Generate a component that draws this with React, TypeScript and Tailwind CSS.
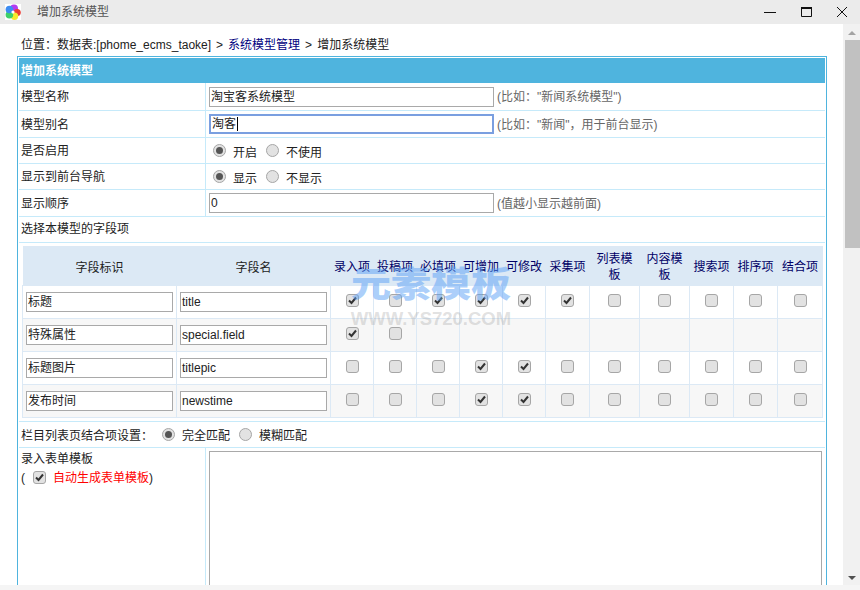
const FONT = "[font-family:'Liberation_Sans','Noto_Sans_CJK_SC',sans-serif]";

const COLUMNS = [
  { label: "录入项", width: "w-[43px]" },
  { label: "投稿项", width: "w-[43px]" },
  { label: "必填项", width: "w-[43px]" },
  { label: "可增加", width: "w-[43px]" },
  { label: "可修改", width: "w-[43px]" },
  { label: "采集项", width: "w-[44px]" },
  { label: "列表模板", width: "w-[50px]" },
  { label: "内容模板", width: "w-[50px]" },
  { label: "搜索项", width: "w-[44px]" },
  { label: "排序项", width: "w-[44px]" },
  { label: "结合项", width: "w-[45px]" },
];

// null = no checkbox in that cell
const ROWS: { title: string; name: string; checks: (boolean | null)[] }[] = [
  { title: "标题", name: "title", checks: [true, false, true, true, true, true, false, false, false, false, false] },
  { title: "特殊属性", name: "special.field", checks: [true, false, null, null, null, null, null, null, null, null, null] },
  { title: "标题图片", name: "titlepic", checks: [false, false, false, true, true, false, false, false, false, false, false] },
  { title: "发布时间", name: "newstime", checks: [false, false, false, true, true, false, false, false, false, false, false] },
];

function Check({ checked }: { checked: boolean }) {
  return (
    <span className="relative block h-[13px] w-[13px] rounded-[3px] border border-[#a6a6a6] bg-[#e2e2e2]">
      {checked && (
        <svg viewBox="0 0 11 11" className="absolute inset-0 h-[11px] w-[11px]">
          <path d="M2 5.5 L4.5 8 L9 2.5" fill="none" stroke="#333" strokeWidth="2" />
        </svg>
      )}
    </span>
  );
}

function Radio({ checked }: { checked: boolean }) {
  return (
    <span className="flex h-[13px] w-[13px] items-center justify-center rounded-full border border-[#a6a6a6] bg-[#e2e2e2]">
      {checked && <span className="h-[7px] w-[7px] rounded-full bg-[#555]" />}
    </span>
  );
}

function RadioGroup({ options, className }: { options: string[]; className?: string }) {
  return (
    <div className={`flex items-center ${className ?? ""}`}>
      {options.map((opt, i) => (
        <span key={opt} className="flex items-center">
          <Radio checked={i === 0} />
          <span className="relative top-[2px] ml-[7px] mr-[9px]">{opt}</span>
        </span>
      ))}
    </div>
  );
}

function FormRow({ label, height, children }: { label: string; height: string; children: React.ReactNode }) {
  return (
    <div className={`flex border-b border-[#c6eafa] ${height}`}>
      <div className="flex w-[187px] shrink-0 items-center border-r border-[#c6eafa] pl-[2px] pt-[1px]">{label}</div>
      <div className="flex flex-1 items-center pl-[3px]">{children}</div>
    </div>
  );
}

function TextBox({ value, focused }: { value: string; focused?: boolean }) {
  return (
    <div
      className={`flex h-[20px] w-[285px] items-center pl-[1px] ${
        focused ? "border-2 border-[#7a9fe0]" : "border border-[#a9a9a9]"
      }`}
    >
      {value}
      {focused && <span className="ml-[1px] h-[14px] w-px bg-black" />}
    </div>
  );
}

function FieldsTable() {
  return (
    <table className="w-[800px] table-fixed border-collapse">
      <thead>
        <tr className="h-[39px] bg-[#dce9f5]">
          <th className="w-[154px] pt-[6px] font-normal text-[#222]">字段标识</th>
          <th className="w-[154px] pt-[6px] font-normal text-[#222]">字段名</th>
          {COLUMNS.map((c) => (
            <th key={c.label} className={`${c.width} px-[3px] pt-[4px] font-normal leading-[16px] text-[#000066]`}>
              {c.label}
            </th>
          ))}
        </tr>
      </thead>
      <tbody>
        {ROWS.map((row, i) => (
          <tr key={row.name} className={`h-[33px] ${i % 2 === 1 ? "bg-[#f7f7f7]" : "bg-white"}`}>
            <td className="border border-[#dce9f5] pl-[3px]">
              <div className="flex h-[20px] w-[147px] items-center border border-[#a9a9a9] bg-white pl-[1px]">{row.title}</div>
            </td>
            <td className="border border-[#dce9f5] pl-[3px]">
              <div className="flex h-[20px] w-[147px] items-center border border-[#a9a9a9] bg-white pl-[1px]">{row.name}</div>
            </td>
            {row.checks.map((c, j) => (
              <td key={j} className="border border-[#dce9f5]">
                {c !== null && (
                  <span className="relative -top-[1px] flex justify-center">
                    <Check checked={c} />
                  </span>
                )}
              </td>
            ))}
          </tr>
        ))}
      </tbody>
    </table>
  );
}

export default function App() {
  return (
    <div className={`flex h-[590px] w-[860px] flex-col overflow-hidden bg-white text-[12px] text-[#222] ${FONT}`}>
      {/* ---- Window title bar ---- */}
      <div className="flex h-[24px] shrink-0 items-center bg-[#ebebeb]">
        <svg viewBox="0 0 16 16" className="ml-[5px] h-[16px] w-[16px]">
          <rect width="16" height="16" fill="#fff" />
          <circle cx="9" cy="4.5" r="4" fill="#b23cf0" />
          <circle cx="12.2" cy="8.5" r="3.6" fill="#ea3d35" />
          <circle cx="9.5" cy="12.3" r="3.7" fill="#f5ea2e" />
          <circle cx="4.4" cy="10.8" r="3.8" fill="#3fd06a" />
          <circle cx="4.4" cy="5.5" r="3.8" fill="#3d8cf2" />
          <circle cx="8" cy="8" r="1.6" fill="#fff" />
        </svg>
        <span className="ml-[16px] text-[#555]">增加系统模型</span>
        <div className="ml-auto mr-[13px] flex items-center gap-[25px]">
          <svg viewBox="0 0 12 12" className="h-[12px] w-[12px]">
            <path d="M0 6.5 H12" stroke="#111" strokeWidth="1" />
          </svg>
          <svg viewBox="0 0 11 10" className="h-[10px] w-[11px]">
            <path d="M.5 1 H10.5 V9.5 H.5 Z" fill="none" stroke="#111" strokeWidth="1" />
            <path d="M0 1 H11" stroke="#111" strokeWidth="2" />
          </svg>
          <svg viewBox="0 0 10 10" className="h-[10px] w-[10px]">
            <path d="M0 0 L10 10 M10 0 L0 10" stroke="#111" strokeWidth="1" />
          </svg>
        </div>
      </div>

      <div className="flex min-h-0 flex-1">
        <div className="min-w-0 flex-1 overflow-hidden">
          {/* ---- Breadcrumb ---- */}
          <div className="ml-[21px] mt-[13px] flex h-[19px] leading-[16px]">
            <span>位置：数据表:[phome_ecms_taoke]</span>
            <span className="mx-[5px]">&gt;</span>
            <a className="mr-[5px] text-[#000080]">系统模型管理</a>
            <span className="mr-[5px]">&gt;</span>
            <span>增加系统模型</span>
          </div>

          {/* ---- Main form ---- */}
          <div className="relative ml-[17px] w-[810px] border border-[#4fb4de] p-px pb-0">
            <div className="flex h-[25px] items-center bg-[#4fb4de] pl-[2px] font-bold text-white">增加系统模型</div>
            <FormRow label="模型名称" height="h-[28px]">
              <TextBox value="淘宝客系统模型" />
              <span className="ml-[3px] pt-[1px] text-[#666]">(比如："新闻系统模型")</span>
            </FormRow>
            <FormRow label="模型别名" height="h-[27px]">
              <TextBox value="淘客" focused />
              <span className="ml-[3px] pt-[1px] text-[#666]">(比如："新闻"，用于前台显示)</span>
            </FormRow>
            <FormRow label="是否启用" height="h-[26px]">
              <RadioGroup options={["开启", "不使用"]} className="pl-[4px]" />
            </FormRow>
            <FormRow label="显示到前台导航" height="h-[26px]">
              <RadioGroup options={["显示", "不显示"]} className="pl-[4px]" />
            </FormRow>
            <FormRow label="显示顺序" height="h-[27px]">
              <TextBox value="0" />
              <span className="ml-[3px] pt-[1px] text-[#666]">(值越小显示越前面)</span>
            </FormRow>
            <div className="flex h-[26px] items-center border-b border-[#c6eafa] pb-[2px] pl-[2px]">选择本模型的字段项</div>
            <div className="border-b border-[#c6eafa] px-[3px] py-[3px]">
              <FieldsTable />
            </div>
            <div className="flex h-[26px] items-center border-b border-[#c6eafa] pl-[2px]">
              <span className="relative top-[2px] mr-[9px]">栏目列表页结合项设置：</span>
              <RadioGroup options={["完全匹配", "模糊匹配"]} />
            </div>
            <div className="flex h-[400px]">
              <div className="w-[187px] shrink-0 border-r border-[#c6eafa] pl-[2px] pt-[2px] leading-[19px]">
                <div>录入表单模板</div>
                <div className="flex items-center">
                  (
                  <span className="relative -top-[1px] ml-[8px] mr-[7px]">
                    <Check checked />
                  </span>
                  <span className="text-[#ff0000]">自动生成表单模板</span>)
                </div>
              </div>
              <div className="flex-1 pl-[3px] pt-[3px]">
                <div className="h-[300px] w-[613px] border border-[#a9a9a9]" />
              </div>
            </div>

            {/* ---- Watermark over the table ---- */}
            <div className="pointer-events-none absolute left-[332px] top-[206px] w-[162px] text-center">
              <div className="scale-y-[.88] text-[40px] font-black leading-[44px] text-[#5aa0f5]/50">元素模板</div>
              <div className="mt-[2px] text-[18.5px] font-bold leading-[20px] text-[#999]/30">WWW.YS720.COM</div>
            </div>
          </div>
        </div>

        {/* ---- Scrollbar ---- */}
        <div className="flex w-[17px] shrink-0 flex-col items-center bg-[#f1f1f1]">
          <span className="mt-[7px] h-0 w-0 border-x-[4px] border-b-[4px] border-x-transparent border-b-[#a3a3a3]" />
          <div className="ml-[2px] mt-[5px] h-[208px] w-[15px] bg-[#c1c1c1]" />
          <span className="mb-[5px] mt-auto h-0 w-0 border-x-[4px] border-t-[4px] border-x-transparent border-t-[#505050]" />
        </div>
      </div>
      <div className="h-[5px] shrink-0 bg-[#f5f5f5]" />
    </div>
  );
}
